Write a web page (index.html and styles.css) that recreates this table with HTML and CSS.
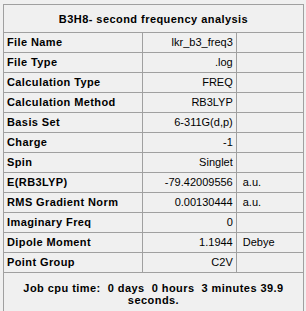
FILE: index.html
```html
<!DOCTYPE html>
<html>
<head>
<meta charset="utf-8">
<link rel="stylesheet" href="styles.css">
</head>
<body>
<div class="panel">
  <table class="summary">
    <colgroup>
      <col class="c-name">
      <col class="c-value">
      <col class="c-unit">
    </colgroup>
    <thead>
      <tr><th colspan="3" class="title">B3H8- second frequency analysis</th></tr>
    </thead>
    <tbody>
      <tr><td class="name">File Name</td><td class="value">lkr_b3_freq3</td><td class="unit"></td></tr>
      <tr><td class="name">File Type</td><td class="value">.log</td><td class="unit"></td></tr>
      <tr><td class="name">Calculation Type</td><td class="value">FREQ</td><td class="unit"></td></tr>
      <tr><td class="name">Calculation Method</td><td class="value">RB3LYP</td><td class="unit"></td></tr>
      <tr><td class="name">Basis Set</td><td class="value">6-311G(d,p)</td><td class="unit"></td></tr>
      <tr><td class="name">Charge</td><td class="value">-1</td><td class="unit"></td></tr>
      <tr><td class="name">Spin</td><td class="value">Singlet</td><td class="unit"></td></tr>
      <tr><td class="name">E(RB3LYP)</td><td class="value">-79.42009556</td><td class="unit">a.u.</td></tr>
      <tr><td class="name">RMS Gradient Norm</td><td class="value">0.00130444</td><td class="unit">a.u.</td></tr>
      <tr><td class="name">Imaginary Freq</td><td class="value">0</td><td class="unit"></td></tr>
      <tr><td class="name">Dipole Moment</td><td class="value">1.1944</td><td class="unit">Debye</td></tr>
      <tr><td class="name">Point Group</td><td class="value">C2V</td><td class="unit"></td></tr>
    </tbody>
    <tfoot>
      <tr><td colspan="3" class="footer"><span class="cpu">Job cpu time:  0 days  0 hours  3 minutes 39.9 seconds.</span></td></tr>
    </tfoot>
  </table>
</div>
</body>
</html>
```
FILE: styles.css
```css
html, body {
  margin: 0;
  padding: 0;
  background: #f0f0f0;
}

body {
  font-family: "Liberation Sans", Arial, sans-serif;
  font-size: 11px;
  color: #000;
}

.panel {
  padding: 4px 0 0 3px;
}

.summary {
  border-collapse: collapse;
  border: 1px solid #8c8c8c;
  table-layout: fixed;
  width: 301px;
}

.c-name { width: 139px; }
.c-value { width: 93px; }
.c-unit { width: 67px; }

.summary th,
.summary td {
  border: 1px solid #a0a0a0;
  padding: 0;
  white-space: nowrap;
  overflow: hidden;
}

.title {
  height: 27px;
  font-weight: bold;
  letter-spacing: 0.45px;
  text-align: center;
  padding-top: 1px;
}

.summary tbody td {
  height: 19px;
  line-height: 13px;
}

.name {
  font-weight: bold;
  letter-spacing: 0.4px;
  padding-left: 3px !important;
  text-align: left;
}

.value {
  text-align: right;
  padding-right: 3px !important;
}

.unit {
  padding-left: 6px !important;
}

.summary .footer {
  height: 32px;
  text-align: center;
  vertical-align: top;
  white-space: normal;
  padding: 9px 16px 0;
  line-height: 12px;
}

.cpu {
  font-weight: bold;
  letter-spacing: 0.45px;
  white-space: pre-wrap;
}
```
